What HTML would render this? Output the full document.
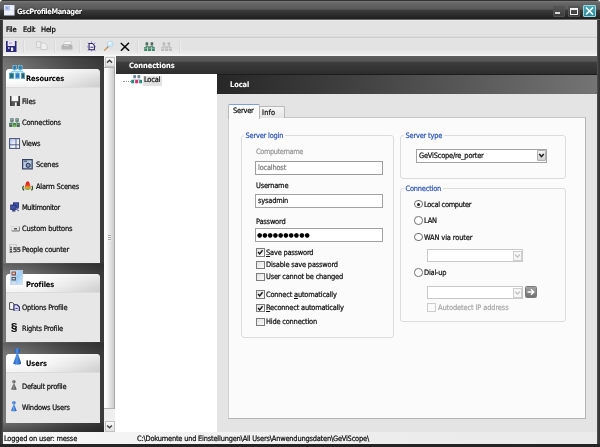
<!DOCTYPE html>
<html><head><meta charset="utf-8"><title>GscProfileManager</title>
<style>
*{box-sizing:border-box;margin:0;padding:0}
html,body{width:600px;height:447px;overflow:hidden;background:#fff}
#frame{left:0;top:0;width:600px;height:447px;background:linear-gradient(90deg,#343434 0,#383838 1.5px,#505050 3px,#2c2c2c 3px,#2c2c2c 597px,#545454 597px,#3a3a3a 598.5px,#323232 600px);border-radius:4px 4px 0 0;border-bottom:3px solid #252525}
body{position:relative;font-family:"DejaVu Sans Condensed","Liberation Sans",sans-serif;font-size:7px;color:#111}
.a{position:absolute}
.t{position:absolute;will-change:transform;white-space:nowrap;line-height:10px;height:10px;font-size:7.4px;letter-spacing:-0.2px;color:#111;-webkit-text-stroke:0.22px currentColor}
.b{font-weight:bold;font-size:7.4px;letter-spacing:-0.05px;-webkit-text-stroke:0.08px currentColor}
.w{color:#fff}
.g{color:#9a9a9a}
.bl{color:#3058b8}
#title{left:0;top:0;width:600px;height:20px;border-radius:4px 4px 0 0;
 background:linear-gradient(#333 0,#333 1px,#7c7c7c 1px,#6a6a6a 2.5px,#646464 4px,#5a5a5a 9px,#3a3a3a 10.5px,#1f1f1f 19px,#6a6a6a 19px,#6a6a6a 20px)}
#menu{left:3px;top:20px;width:594px;height:17px;background:linear-gradient(#ececec 0,#e3e3e3 1.5px,#e3e3e3 14px,#dedede 14px,#dedede 15px,#e7e7e7 15px,#e7e7e7 16px,#dbdbdb 16px)}
#tool{left:3px;top:37px;width:594px;height:19px;background:linear-gradient(#cfcfcf 0,#cfcfcf 1px,#e3e3e3 1px,#e3e3e3 12px,#eeeeee 17px,#fafafa 19px)}
.sep{position:absolute;top:40px;width:1px;height:13px;background:#dadada;box-shadow:1px 0 0 #ececec}
#side{left:3px;top:56px;width:101px;height:376px;background:linear-gradient(rgba(0,0,0,.25) 0,rgba(0,0,0,.08) 3px,rgba(0,0,0,0) 12px,rgba(0,0,0,0) 207px,rgba(0,0,0,.2) 208px,rgba(0,0,0,0) 218px,rgba(0,0,0,0) 286px,rgba(0,0,0,.2) 287px,rgba(0,0,0,0) 298px,rgba(0,0,0,0) 366px,rgba(0,0,0,.1) 367px,rgba(0,0,0,.35) 376px),linear-gradient(90deg,#787878 0,#6e6e6e 22%,#4a4a4a 70%,#3a3a3a 100%)}
.pn{position:absolute;left:3px;width:94px;background:#e7e7e7;border-radius:4px 4px 0 0;overflow:hidden}
.ph{position:absolute;left:0;top:0;width:94px;height:19px;background:linear-gradient(rgba(255,255,255,.55) 0,rgba(255,255,255,0) 55%,rgba(0,0,0,.05) 100%),linear-gradient(90deg,#fff 0,#fdfdfd 30%,#ececec 65%,#d9d9d9 100%);border-bottom:1px solid #dcdcdc}
#sb{left:104px;top:56px;width:11px;height:376px;background:#efefef}
#tree{left:115px;top:56px;width:102px;height:376px;background:#fff}
#hdr{left:116px;top:56px;width:481px;height:18px;background:linear-gradient(#5e5e5e 0,#585858 5px,#3d3d3d 6.5px,#2d2d2d 18px)}
#hdr2{left:217px;top:74px;width:380px;height:20px;background:linear-gradient(90deg,#272727 0,#3c3c3c 30%,#747474 100%);border-top:1px solid #1c1c1c}
#content{left:217px;top:94px;width:380px;height:338px;background:#e4e4e4}
#pane{left:228px;top:117px;width:358px;height:302px;background:#fbfbfb;border:1px solid #b4b4b4;border-top-color:#c8c8c8;border-left-color:#d0d0d0}
.grp{position:absolute;border:1px solid #dcdcdc;border-radius:3px}
.in{position:absolute;height:14px;border:1px solid #a2a2a2;background:#fff}
.cb{position:absolute;width:8.5px;height:8.5px;border:1px solid #7c7c7c;background:linear-gradient(135deg,#e2e2e2,#fbfbfb)}
.rd{position:absolute;width:8.6px;height:8.6px;border:1px solid #707070;border-radius:50%;background:#fff}
#status{left:3px;top:432px;width:594px;height:12px;background:linear-gradient(90deg,#f7f7f7 0,#f3f3f3 25%,#ececec 70%,#eaeaea 100%)}
</style></head><body>
<div id="frame" class="a"></div>
<div id="title" class="a"></div>
<div class="t b w" style="left:17px;top:6.5px;letter-spacing:-0.36px;text-shadow:0 0 1px #000,0 0 2px rgba(0,0,0,.7),0 1px 2px rgba(0,0,0,.5)">GscProfileManager</div>
<div id="menu" class="a"></div>
<div class="t" style="left:6px;top:24.8px;font-size:7.5px;color:#000">File</div>
<div class="t" style="left:23px;top:24.8px;font-size:7.5px;color:#000">Edit</div>
<div class="t" style="left:40.5px;top:24.8px;font-size:7.5px;color:#000">Help</div>
<div id="tool" class="a"></div>
<div class="sep" style="left:23px"></div><div class="sep" style="left:54px"></div><div class="sep" style="left:79px"></div><div class="sep" style="left:137px"></div><div class="sep" style="left:179px"></div>
<div id="side" class="a">
 <div class="pn" style="top:13px;height:194px"><div class="ph"></div></div>
 <div class="pn" style="top:218px;height:68px"><div class="ph"></div></div>
 <div class="pn" style="top:298px;height:69px"><div class="ph"></div></div>
</div>
<div id="sb" class="a"></div>
<div id="tree" class="a"></div>
<div id="hdr" class="a"></div>
<div id="hdr2" class="a"></div>
<div id="content" class="a"></div>
<div id="pane" class="a"></div>
<div id="status" class="a"></div>
<div class="t" style="left:22px;top:97.1px">Files</div>
<div class="t" style="left:22px;top:118.2px">Connections</div>
<div class="t" style="left:22px;top:139.3px">Views</div>
<div class="t" style="left:35.5px;top:160.4px">Scenes</div>
<div class="t" style="left:35.5px;top:181.5px">Alarm Scenes</div>
<div class="t" style="left:22px;top:202.6px;letter-spacing:-0.37px">Multimonitor</div>
<div class="t" style="left:22px;top:223.7px">Custom buttons</div>
<div class="t" style="left:22px;top:244.8px">People counter</div>
<div class="t" style="left:22px;top:302.5px">Options Profile</div>
<div class="t" style="left:22px;top:323.6px">Rights Profile</div>
<div class="t" style="left:22px;top:381.6px">Default profile</div>
<div class="t" style="left:22px;top:402.7px">Windows Users</div>
<div class="t b" style="left:25.5px;top:74.1px;color:#000">Resources</div>
<div class="t b" style="left:25.5px;top:280.1px;color:#000">Profiles</div>
<div class="t b" style="left:25.5px;top:358.7px;color:#000">Users</div>
<div class="t b w" style="left:129px;top:61px">Connections</div>
<div class="t b w" style="left:230px;top:79.9px">Local</div>
<div class="a" style="left:142.5px;top:75.5px;width:19px;height:10px;background:#e2e2e2"></div>
<div class="t" style="left:144px;top:74.9px">Local</div>
<div class="a" style="left:123px;top:81px;width:8px;height:0;border-top:1px dotted #9a9a9a"></div>
<div class="a" style="left:259px;top:105.5px;width:26px;height:12.5px;background:linear-gradient(#f6f6f6,#e4e4e4);border:1px solid #b8b8b8;border-bottom:none;border-radius:2px 2px 0 0"></div>
<div class="a" style="left:228px;top:104px;width:31.5px;height:14.5px;background:#fbfbfb;border:1px solid #b8b8b8;border-top:1.5px solid #7f9fd8;border-bottom:none;border-radius:2px 2px 0 0"></div>
<div class="t" style="left:233px;top:106.4px">Server</div>
<div class="t" style="left:262px;top:107.9px;letter-spacing:0.2px">Info</div>
<div class="grp" style="left:241px;top:135px;width:153px;height:203px"></div>
<div class="grp" style="left:400px;top:135px;width:166px;height:44px"></div>
<div class="grp" style="left:400px;top:188px;width:166px;height:134px"></div>
<div class="t bl" style="left:244.2px;top:131px;background:#fbfbfb;padding:0 1.5px">Server login</div>
<div class="t bl" style="left:404px;top:131px;background:#fbfbfb;padding:0 1.5px">Server type</div>
<div class="t bl" style="left:404px;top:184.4px;background:#fbfbfb;padding:0 1.5px">Connection</div>
<div class="t g" style="left:256px;top:147.2px;letter-spacing:-0.4px">Computername</div>
<div class="in" style="left:255px;top:160.5px;width:128px;border-color:#9c9c9c"></div><div class="t" style="left:257.5px;top:162.5px;color:#7c7c7c">localhost</div>
<div class="t" style="left:256px;top:180.5px">Username</div>
<div class="in" style="left:255px;top:194px;width:128px"></div><div class="t" style="left:257.5px;top:196px">sysadmin</div>
<div class="t" style="left:256px;top:216.8px">Password</div>
<div class="in" style="left:255px;top:228px;width:128px"></div>
<div class="t" style="left:257.3px;top:230.2px;font-family:'DejaVu Sans','Liberation Sans',sans-serif;font-size:6.1px;letter-spacing:-0.05px;color:#000;-webkit-text-stroke:0">●●●●●●●●●●</div>
<div class="cb" style="left:256px;top:248.1px"><svg width="6.5" height="6.5" viewBox="0 0 7 7" style="position:absolute;left:0;top:0"><path d="M1.1 3.3 L2.9 5.3 L6 1.4" stroke="#1a1a1a" stroke-width="1.5" fill="none"/></svg></div><div class="t" style="left:266.2px;top:247.6px"><u>S</u>ave password</div>
<div class="cb" style="left:256px;top:260.5px"></div><div class="t" style="left:266.2px;top:260.0px">Disable save password</div>
<div class="cb" style="left:256px;top:272.7px"></div><div class="t" style="left:266.2px;top:272.2px">User cannot be changed</div>
<div class="cb" style="left:256px;top:290.3px"><svg width="6.5" height="6.5" viewBox="0 0 7 7" style="position:absolute;left:0;top:0"><path d="M1.1 3.3 L2.9 5.3 L6 1.4" stroke="#1a1a1a" stroke-width="1.5" fill="none"/></svg></div><div class="t" style="left:266.2px;top:289.8px">Connect <u>a</u>utomatically</div>
<div class="cb" style="left:256px;top:303.9px"><svg width="6.5" height="6.5" viewBox="0 0 7 7" style="position:absolute;left:0;top:0"><path d="M1.1 3.3 L2.9 5.3 L6 1.4" stroke="#1a1a1a" stroke-width="1.5" fill="none"/></svg></div><div class="t" style="left:266.2px;top:303.4px"><u>R</u>econnect automatically</div>
<div class="cb" style="left:256px;top:317.5px"></div><div class="t" style="left:266.2px;top:317.0px">Hide connection</div>
<div class="in" style="left:415.5px;top:148.5px;width:131px;height:14px"></div><div class="t" style="left:419px;top:150.5px">GeViScope/re_porter</div>
<div class="a" style="left:536.5px;top:150px;width:9px;height:11px;background:linear-gradient(#f4f4f4,#cfcfcf);border:1px solid #b0b0b0;border-radius:1px"><svg width="7" height="9" viewBox="0 0 7 9" style="position:absolute;left:0;top:0"><path d="M1.2 3 L3.5 5.6 L5.8 3" stroke="#222" stroke-width="1.5" fill="none"/></svg></div>
<div class="rd" style="left:414px;top:199.9px"><div class="a" style="left:1.8px;top:1.8px;width:3px;height:3px;border-radius:50%;background:#222"></div></div><div class="t" style="left:424px;top:199.8px;letter-spacing:-0.3px">Local computer</div>
<div class="rd" style="left:414px;top:216.0px"></div><div class="t" style="left:424px;top:215.9px">LAN</div>
<div class="rd" style="left:414px;top:232.5px"></div><div class="t" style="left:424px;top:232.8px;letter-spacing:-0.12px">WAN via router</div>
<div class="rd" style="left:414px;top:268.2px"></div><div class="t" style="left:424px;top:268.2px">Dial-up</div>
<div class="in" style="left:427px;top:249px;width:96px;height:13px;border-color:#c9c9c9"></div><div class="a" style="left:512.5px;top:250.5px;width:9px;height:10px;border:1px solid #cfcfcf;background:#f6f6f6"><svg width="7" height="8" viewBox="0 0 7 8" style="position:absolute;left:0;top:0"><path d="M1.2 2.6 L3.5 5.2 L5.8 2.6" stroke="#bdbdbd" stroke-width="1.2" fill="none"/></svg></div>
<div class="in" style="left:427px;top:286px;width:96px;height:13px;border-color:#c9c9c9"></div><div class="a" style="left:512.5px;top:287.5px;width:9px;height:10px;border:1px solid #cfcfcf;background:#f6f6f6"><svg width="7" height="8" viewBox="0 0 7 8" style="position:absolute;left:0;top:0"><path d="M1.2 2.6 L3.5 5.2 L5.8 2.6" stroke="#bdbdbd" stroke-width="1.2" fill="none"/></svg></div>
<div class="a" style="left:525px;top:286px;width:12px;height:12px;background:linear-gradient(#a2a2a2,#727272);border:1px solid #7a7a7a;border-radius:1.5px"><svg width="10" height="10" viewBox="0 0 10 10" style="position:absolute;left:0;top:0"><path d="M1.5 5 H7.5 M5 2.2 L7.8 5 L5 7.8" stroke="#fff" stroke-width="1.4" fill="none"/></svg></div>
<div class="cb" style="left:427px;top:303px;border-color:#cdcdcd;background:#fafafa"></div><div class="t g" style="left:438px;top:302.6px;color:#a8a8a8;letter-spacing:-0.12px">Autodetect IP address</div>
<div class="t" style="left:4px;top:433.5px">Logged on user: messe</div>
<div class="t" style="left:137px;top:433.5px">C:\Dokumente und Einstellungen\All Users\Anwendungsdaten\GeViScope\</div>
<svg class="a" style="left:4px;top:5px" width="10.5" height="10.5" viewBox="0 0 10.5 10.5"><rect x="0" y="0" width="10.5" height="10.5" fill="#dfe6f8"/><rect x="1" y="1" width="5" height="4.5" fill="#b7c4ec"/><rect x="6" y="1.5" width="3.5" height="3" fill="#eef2fc"/><rect x="1" y="6" width="8.5" height="3.5" fill="#edf1fb"/><rect x="2" y="2" width="2" height="2" fill="#8fa2dc"/></svg>
<div class="a" style="left:552.5px;top:5.5px;width:12px;height:11px;background:linear-gradient(#555,#3c3c3c);border:1px solid #505050;border-radius:1px"></div><div class="a" style="left:555.2px;top:12.3px;width:4.6px;height:1.7px;background:#d8d8d8"></div>
<div class="a" style="left:567.5px;top:5.5px;width:12px;height:11px;background:linear-gradient(#555,#3c3c3c);border:1px solid #505050;border-radius:1px"></div><div class="a" style="left:570px;top:7.5px;width:8px;height:7.5px;border:1px solid #f0f0f0;border-top-width:2px"></div>
<div class="a" style="left:582.5px;top:5px;width:13px;height:12px;background:linear-gradient(#4aa8b8,#2f8a9c);border:1px solid #9ad8e0;border-radius:1px"></div><svg class="a" style="left:582.5px;top:5px" width="13" height="12" viewBox="0 0 13 12"><path d="M3 2.5 L10 9.5 M10 2.5 L3 9.5" stroke="#fff" stroke-width="1.6" fill="none"/></svg>
<svg class="a" style="left:6px;top:41px" width="10.5" height="11" viewBox="0 0 10.5 11"><path d="M0 0 H1.8 V5 H8.7 V0 H10.5 V11 H0 Z" fill="#2b2878"/><rect x="1.8" y="0.3" width="6.9" height="4.7" fill="#e9e6fa"/><rect x="3" y="1.5" width="3" height="1.3" fill="#b9a9e8"/><rect x="5" y="6.5" width="2.2" height="3.5" fill="#eceafc"/><rect x="2" y="6.2" width="1.6" height="1.6" fill="#d8d4f4"/></svg>
<svg class="a" style="left:36px;top:40.5px" width="12" height="9" viewBox="0 0 12 9"><path d="M0.5 0.5 H5 V6.5 H0.5 Z" fill="#eaeaea" stroke="#c9c9c9" stroke-width="0.8"/><path d="M5 2 H8.5 L11 4.5 V8.5 H5 Z" fill="#efefef" stroke="#c6c6c6" stroke-width="0.8"/></svg>
<svg class="a" style="left:61px;top:41px" width="12" height="10" viewBox="0 0 12 10"><path d="M3.5 0.5 H10.5 L9.5 3.5 H2.5 Z" fill="#f4f4f4" stroke="#c4c4c4" stroke-width="0.6"/><path d="M1.5 3.5 H10.5 L11.5 5 V8.5 H0.5 V5 Z" fill="#b4b4b4"/><rect x="1.5" y="8.2" width="9" height="1.3" fill="#cdcdcd"/><rect x="3" y="4.3" width="5" height="0.9" fill="#dcdcdc"/></svg>
<svg class="a" style="left:87.2px;top:40.8px" width="9.2" height="10.8" viewBox="0 0 11 12"><g stroke="#9a78d8" stroke-width="1.15"><path d="M1 1.5 L3 3.5 M10 1.5 L8 3.5 M1 11 L3 9 M10 11 L8.5 9.5 M5.5 0 V2 M5.5 10.5 V12 M0 6.5 H1.8 M9.5 6.5 H11"/></g><path d="M2.5 2.5 H6.5 L8.8 4.8 V10 H2.5 Z" fill="#f4f2ff" stroke="#2a2266" stroke-width="1.3"/><path d="M4 7 H7.5" stroke="#2a2266" stroke-width="1.1"/></svg>
<svg class="a" style="left:102.5px;top:40px" width="11" height="12" viewBox="0 0 11 12"><path d="M5.3 6.6 L1.6 10.2" stroke="#d29a5c" stroke-width="1.4" stroke-linecap="round"/><path d="M5.6 6.2 L4.4 7.4" stroke="#8a8a9a" stroke-width="1.2"/><circle cx="7.3" cy="4" r="2.9" fill="#cdeaf8" stroke="#b4d2e4" stroke-width="0.8"/><circle cx="6.6" cy="3.2" r="1.2" fill="#f2fbff"/></svg>
<svg class="a" style="left:119.5px;top:41.6px" width="10" height="9.6" viewBox="0 0 10.5 10"><path d="M0.8 1 L9.6 9.2 M9.4 0.8 L1 9.2" stroke="#0a0a0a" stroke-width="1.55" fill="none"/></svg>
<svg class="a" style="left:144px;top:41.5px" width="11" height="9.5" viewBox="0 0 11 9.5"><g opacity="1"><rect x="1.6" y="0.3" width="2.6" height="3" fill="#4a6a5e"/><rect x="6.6" y="0.3" width="2.6" height="3" fill="#4a6a5e"/><path d="M2.9 3.3 V5 M7.9 3.3 V5 M1.5 4.6 H9.5" stroke="#4a6a5e" stroke-width="0.7"/><rect x="0.2" y="5" width="3" height="4" fill="#3f876a"/><rect x="4" y="5" width="3" height="4" fill="#3f876a"/><rect x="7.8" y="5" width="3" height="4" fill="#3f876a"/><path d="M0.6 6.3 H2.8 M4.4 6.3 H6.6 M8.2 6.3 H10.4" stroke="#fff" stroke-width="0.6" opacity="0.7"/></g></svg>
<svg class="a" style="left:161px;top:41.5px" width="11" height="9.5" viewBox="0 0 11 9.5"><g opacity="1"><rect x="1.6" y="0.3" width="2.6" height="3" fill="#b9b9b9"/><rect x="6.6" y="0.3" width="2.6" height="3" fill="#b9b9b9"/><path d="M2.9 3.3 V5 M7.9 3.3 V5 M1.5 4.6 H9.5" stroke="#b9b9b9" stroke-width="0.7"/><rect x="0.2" y="5" width="3" height="4" fill="#bdbdbd"/><rect x="4" y="5" width="3" height="4" fill="#bdbdbd"/><rect x="7.8" y="5" width="3" height="4" fill="#bdbdbd"/><path d="M0.6 6.3 H2.8 M4.4 6.3 H6.6 M8.2 6.3 H10.4" stroke="#fff" stroke-width="0.6" opacity="0.7"/></g></svg>
<svg class="a" style="left:8.5px;top:64.5px" width="16" height="15" viewBox="0 0 16 15"><path d="M5.6 4.9 V6.4 M11.4 4.9 V6.4 M2.6 6.6 H14 M2.6 6.6 V8 M8.5 6.6 V8 M14 6.6 V8" stroke="#7cc4ea" stroke-width="0.9" fill="none"/><rect x="3.9" y="0.2" width="3.5" height="4.7" fill="#3b88b8" stroke="#7fcbea" stroke-width="0.7"/><rect x="9.6" y="0.2" width="3.5" height="4.7" fill="#3b88b8" stroke="#7fcbea" stroke-width="0.7"/><rect x="4.6" y="1.8" width="2.1" height="1.6" fill="#2a6f9c"/><rect x="10.3" y="1.8" width="2.1" height="1.6" fill="#2a6f9c"/><rect x="0.3" y="8" width="4.6" height="5.6" fill="#2c7d92" stroke="#5fb0c8" stroke-width="0.6"/><rect x="6.4" y="8" width="4.1" height="5.6" fill="#3a8fd0" stroke="#6cb8ea" stroke-width="0.6"/><rect x="12.2" y="8" width="3.5" height="5.6" fill="#2a6c84" stroke="#5aa6c0" stroke-width="0.6"/><rect x="1.3" y="9.6" width="2.6" height="2.4" fill="#1f6478"/><rect x="7.3" y="9.4" width="2.3" height="2.6" fill="#2a78b8"/><rect x="13" y="9.6" width="1.9" height="2.4" fill="#1f5a70"/></svg>
<svg class="a" style="left:9.6px;top:270px" width="13" height="15" viewBox="0 0 13 15"><defs><linearGradient id="pb" x1="0" y1="0" x2="1" y2="1"><stop offset="0" stop-color="#e9eef8"/><stop offset="0.5" stop-color="#9ccdf2"/><stop offset="1" stop-color="#d6e6f8"/></linearGradient></defs><rect x="0.3" y="0.3" width="12.4" height="14.4" fill="url(#pb)" stroke="#c9d6ea" stroke-width="0.6"/><rect x="1.5" y="1.5" width="4.5" height="4" fill="#8d4f3e"/><rect x="2.6" y="2.6" width="2.2" height="1.6" fill="#e8d6cf"/><rect x="1.5" y="7" width="4.5" height="3.5" fill="#5a5f6a"/><rect x="2.6" y="8" width="2.2" height="1.3" fill="#cfd6e2"/><rect x="1.5" y="11.5" width="4.5" height="2.5" fill="#d4dcee"/></svg>
<svg class="a" style="left:12.8px;top:347.5px" width="8.6" height="17" viewBox="0 0 8.6 17"><defs><linearGradient id="g128347" x1="0" y1="0" x2="1" y2="0"><stop offset="0" stop-color="#1f58b5"/><stop offset="0.45" stop-color="#4f93ea"/><stop offset="1" stop-color="#1d4fa5"/></linearGradient></defs><path d="M4.3 3.74 L8.427999999999999 15.81 Q4.3 17.68 0.172 15.81 Z" fill="url(#g128347)"/><circle cx="4.3" cy="2.89" r="2.72" fill="url(#g128347)"/></svg>
<svg class="a" style="left:11.4px;top:380.3px" width="5.8" height="10.2" viewBox="0 0 5.8 10.2"><defs><linearGradient id="g114380" x1="0" y1="0" x2="1" y2="0"><stop offset="0" stop-color="#4a4a4a"/><stop offset="0.45" stop-color="#8a8a8a"/><stop offset="1" stop-color="#3f3f3f"/></linearGradient></defs><path d="M2.9 2.2439999999999998 L5.684 9.486 Q2.9 10.607999999999999 0.11599999999999999 9.486 Z" fill="url(#g114380)"/><circle cx="2.9" cy="1.734" r="1.632" fill="url(#g114380)"/></svg>
<svg class="a" style="left:11.4px;top:401.2px" width="5.8" height="10.6" viewBox="0 0 5.8 10.6"><defs><linearGradient id="g114401" x1="0" y1="0" x2="1" y2="0"><stop offset="0" stop-color="#1f58b5"/><stop offset="0.45" stop-color="#5fa3f2"/><stop offset="1" stop-color="#1d4fa5"/></linearGradient></defs><path d="M2.9 2.332 L5.684 9.858 Q2.9 11.024 0.11599999999999999 9.858 Z" fill="url(#g114401)"/><circle cx="2.9" cy="1.802" r="1.696" fill="url(#g114401)"/></svg>
<svg class="a" style="left:10px;top:96.3px" width="10" height="10" viewBox="0 0 10 10"><rect x="0" y="0" width="10" height="10" fill="#f7f7f7"/><path d="M0 0 H1.5 V5.2 H8.3 V0 H10 V10 H0 Z" fill="#3e3e3e"/><rect x="4.7" y="6.3" width="2" height="3.7" fill="#f2f2f2"/><path d="M1.5 5.2 L4.7 6.6 V10 H1.5Z" fill="#555"/></svg>
<svg class="a" style="left:8.8px;top:117.5px" width="11" height="9.5" viewBox="0 0 11 9.5"><rect x="0" y="4" width="11" height="5.5" fill="#cfe6cf" opacity="0.6"/><rect x="1.3" y="0.3" width="3.3" height="3.5" fill="#4f6e6c"/><rect x="6.4" y="0.3" width="3.3" height="3.5" fill="#4f6e6c"/><rect x="2" y="1.2" width="1.9" height="1.2" fill="#9fb5b3"/><rect x="7.1" y="1.2" width="1.9" height="1.2" fill="#9fb5b3"/><path d="M2.9 3.8 V5 M8 3.8 V5" stroke="#5a7a70" stroke-width="0.8"/><rect x="0.2" y="4.9" width="3.2" height="4" fill="#3f6152"/><rect x="3.9" y="4.9" width="3.2" height="4" fill="#4a8a4a"/><rect x="7.6" y="4.9" width="3.2" height="4" fill="#3f6152"/><rect x="4.3" y="7" width="2.4" height="1.9" fill="#6cbf4a"/><path d="M0.7 6.2 H2.9 M8.1 6.2 H10.3" stroke="#a9c4b4" stroke-width="0.7"/></svg>
<svg class="a" style="left:9px;top:137.8px" width="11.2" height="11" viewBox="0 0 11.2 11"><defs><linearGradient id="vg" x1="0" y1="0" x2="1" y2="1"><stop offset="0" stop-color="#b4c4ee"/><stop offset="0.55" stop-color="#eef2fd"/><stop offset="1" stop-color="#ffffff"/></linearGradient></defs><rect x="0.6" y="0.6" width="10" height="9.8" fill="url(#vg)" stroke="#46557a" stroke-width="1.05"/><path d="M7 0.6 V10.4 M0.6 6.8 H10.6" stroke="#46557a" stroke-width="0.9"/></svg>
<svg class="a" style="left:22px;top:159.3px" width="10.8" height="10.5" viewBox="0 0 10.8 10.5"><rect x="0.6" y="0.6" width="9.6" height="9.3" fill="#b4c3de" stroke="#33415f" stroke-width="1.2"/><path d="M2 8.5 L4.5 4.5 L6 6.5 L8.5 2" stroke="#dfe8fa" stroke-width="0.8" fill="none"/><circle cx="6.2" cy="6.3" r="2.1" fill="#8394b8" stroke="#25304d" stroke-width="1"/><path d="M2.2 2.2 H5" stroke="#25304d" stroke-width="0.9"/></svg>
<svg class="a" style="left:21.8px;top:180.8px" width="11.4" height="10.2" viewBox="0 0 11.4 10.2"><defs><linearGradient id="ag" x1="0" y1="0" x2="0" y2="1"><stop offset="0" stop-color="#d81818"/><stop offset="0.45" stop-color="#ea3a25"/><stop offset="0.7" stop-color="#e89a30"/><stop offset="0.86" stop-color="#a8b030"/><stop offset="1" stop-color="#3f7a2a"/></linearGradient></defs><path d="M5.7 0.3 Q7.4 0.6 7.8 3 L9.2 7.6 Q5.7 10 2.2 7.6 L3.6 3 Q4 0.6 5.7 0.3Z" fill="url(#ag)"/><path d="M1.6 4.8 Q-0.2 7.2 2 9.4 M9.8 4.8 Q11.6 7.2 9.4 9.4" stroke="#2a4a22" stroke-width="1.25" fill="none"/></svg>
<svg class="a" style="left:9.6px;top:201.8px" width="9.6" height="9.8" viewBox="0 0 9.6 9.8"><rect x="3" y="0.3" width="6.3" height="5.5" fill="#28347e"/><rect x="4" y="1.2" width="4.3" height="3.4" fill="#4658aa"/><rect x="0.2" y="2.6" width="6.3" height="5.3" fill="#222e72"/><rect x="1.1" y="3.5" width="4.5" height="3.4" fill="#4053a4"/><path d="M2 8.9 H5.5 M3.7 7.9 V9" stroke="#26347f" stroke-width="1.2"/><path d="M6.5 6.2 H8.6 M6.5 7.4 L8.8 8.8" stroke="#2c3c94" stroke-width="1"/></svg>
<svg class="a" style="left:10.5px;top:226.4px" width="9" height="5.4" viewBox="0 0 9 5.4"><rect x="0.3" y="0.3" width="8.4" height="4.8" rx="1" fill="#dedede" stroke="#8a8a8a" stroke-width="0.6"/><path d="M0.8 4.9 H8.6 V1" stroke="#6d6d6d" stroke-width="0.7" fill="none"/><path d="M0.8 4.4 V0.8 H8.2" stroke="#fff" stroke-width="0.7" fill="none"/><path d="M3 2.8 H6" stroke="#444" stroke-width="1.3"/></svg>
<svg class="a" style="left:8.8px;top:244.3px" width="11.6" height="9" viewBox="0 0 11.6 9"><rect x="0.4" y="0.4" width="7" height="8" fill="none" stroke="#8a8a8a" stroke-width="0.7" stroke-dasharray="1 1"/><path d="M2 4 V8.5 M1 5.5 H3 M2 7 L1 8.6 M2 7 L3 8.6" stroke="#333" stroke-width="0.8"/><circle cx="2" cy="3.2" r="0.8" fill="#333"/></svg>
<div class="t" style="left:12.6px;top:245px;font-size:6.5px;font-weight:bold;color:#444;letter-spacing:-0.4px">55</div>
<svg class="a" style="left:8.8px;top:301.6px" width="11.2" height="9.8" viewBox="0 0 11.2 9.8"><path d="M0.6 0.6 H3.6 L5.2 2.2 V7.4 H0.6 Z" fill="#f4f4f4" stroke="#4a4a4a" stroke-width="1"/><path d="M5 2.8 H8.2 L10.4 5 V9.2 H5 Z" fill="#dcd8f6" stroke="#2a2868" stroke-width="1.1"/><path d="M6.4 6.5 H8.8" stroke="#2a2868" stroke-width="0.8"/></svg>
<div class="t" style="left:11.2px;top:321.3px;font-family:'Liberation Sans',sans-serif;font-size:11.5px;line-height:13px;height:13px;font-weight:bold;color:#0c0c0c">§</div>
<svg class="a" style="left:131px;top:75.2px" width="11.4" height="8.6" viewBox="0 0 11.4 8.6"><rect x="2.3" y="0.2" width="2.7" height="2.7" fill="#5d7f92"/><rect x="6.5" y="0.2" width="2.7" height="2.7" fill="#5d7f92"/><path d="M3.6 3 V4.4 M7.8 3 V4.4 M1.5 4.3 H10" stroke="#9ab" stroke-width="0.5"/><rect x="0.2" y="4.9" width="3" height="3.4" fill="#2c8c7e"/><rect x="4.2" y="4.9" width="3" height="3.4" fill="#d4306f"/><rect x="8.2" y="4.9" width="3" height="3.4" fill="#2c8c7e"/></svg>
<div class="a" style="left:104.5px;top:56.5px;width:10px;height:10.5px;background:linear-gradient(#fafafa,#e0e0e0);border:1px solid #c2c2c2"></div><svg class="a" style="left:105px;top:57px" width="9" height="9" viewBox="0 0 9 9"><path d="M2 5.6 L4.5 3.2 L7 5.6" stroke="#444" stroke-width="1.5" fill="none"/></svg>
<div class="a" style="left:104px;top:67px;width:11px;height:342px;background:linear-gradient(90deg,#ffffff 0,#fafafa 25%,#e4e4e4 60%,#d3d3d3 88%,#cfcfcf 100%);border:1px solid #b4b4b4;border-left:none;border-right-color:#a6a6a6"></div><div class="a" style="left:104.5px;top:420.5px;width:10px;height:11px;background:linear-gradient(#fafafa,#e0e0e0);border:1px solid #c2c2c2"></div><svg class="a" style="left:105px;top:421.5px" width="9" height="9" viewBox="0 0 9 9"><path d="M2.1 3.4 L4.5 5.7 L6.9 3.4" stroke="#444" stroke-width="1.4" fill="none"/></svg>
<div class="a" style="left:108.2px;top:234.5px;width:2.6px;height:6px;background:repeating-linear-gradient(#a9a9a9 0,#a9a9a9 1px,#f0f0f0 1px,#f0f0f0 2px)"></div>
</body></html>
